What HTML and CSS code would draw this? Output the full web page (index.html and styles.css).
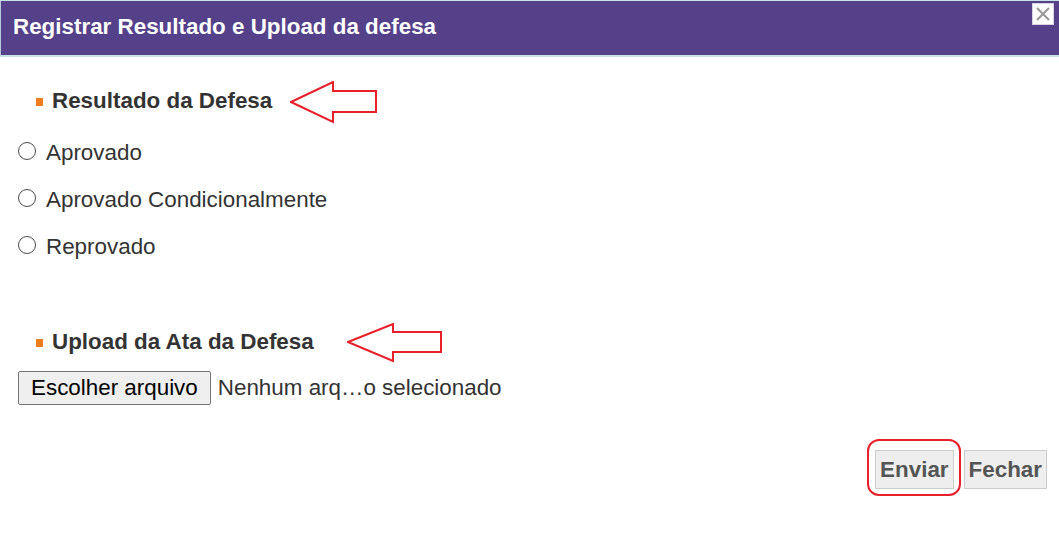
FILE: index.html
```html
<!DOCTYPE html>
<html lang="pt-BR">
<head>
    <meta charset="UTF-8">
    <meta name="viewport" content="width=device-width, initial-scale=1.0">
    <title>Registrar Resultado e Upload da defesa</title>
    <link rel="stylesheet" href="styles.css">
</head>
<body>
    <div class="dialog">
        <div class="dialog-header">
            <span class="dialog-title">Registrar Resultado e Upload da defesa</span>
            <button class="close-btn" title="Fechar">
                <svg width="16" height="16" viewBox="0 0 16 16">
                    <path d="M2 2 L14 14 M14 2 L2 14" stroke="#9a9a9a" stroke-width="2.2" fill="none"/>
                </svg>
            </button>
        </div>

        <div class="dialog-body">
            <div class="section-title">
                <span class="bullet"></span>Resultado da Defesa
                <svg class="arrow arrow-first" width="88" height="43" viewBox="0 0 88 43">
                    <polygon points="1,21 43,1 43,10 86,10 86,31 43,31 43,41" fill="none" stroke="#e8202a" stroke-width="2"/>
                </svg>
            </div>

            <label class="radio-row"><span class="radio"></span>Aprovado</label>
            <label class="radio-row"><span class="radio"></span>Aprovado Condicionalmente</label>
            <label class="radio-row"><span class="radio"></span>Reprovado</label>

            <div class="section-title upload-title">
                <span class="bullet"></span>Upload da Ata da Defesa
                <svg class="arrow arrow-second" width="96" height="40" viewBox="0 0 96 40">
                    <polygon points="1,19 46,1 46,9 94,9 94,29 46,29 46,38" fill="none" stroke="#e8202a" stroke-width="2"/>
                </svg>
            </div>

            <div class="file-row">
                <button class="file-btn">Escolher arquivo</button>
                <span class="file-name">Nenhum arq…o selecionado</span>
            </div>

            <div class="actions">
                <span class="highlight"><button class="action-btn">Enviar</button></span>
                <button class="action-btn close-action">Fechar</button>
            </div>
        </div>
    </div>
</body>
</html>
```

FILE: styles.css
```css
body {
    margin: 0;
    font-family: "Liberation Sans", Arial, sans-serif;
    background-color: #fff;
}
.dialog {
    border-top: 1px solid #c9e2e4;
}
.dialog-header {
    display: flex;
    justify-content: space-between;
    align-items: flex-start;
    height: 54px;
    padding: 0 5px 0 12px;
    background-color: #54418a;
    border-left: 1px solid #b9c9dc;
    border-bottom: 2px solid #c9e2e4;
}
.dialog-title {
    color: #fff;
    font-size: 22.4px;
    font-weight: bold;
    line-height: 52px;
}
.close-btn {
    display: flex;
    align-items: center;
    justify-content: center;
    width: 22px;
    height: 22px;
    margin-top: 2px;
    padding: 0;
    background-color: #fff;
    border: 1px solid #d8d4e4;
    cursor: pointer;
}
.dialog-body {
    padding: 29px 12px 0 18px;
}
.section-title {
    padding-left: 18px;
    font-size: 22.4px;
    font-weight: bold;
    line-height: 30px;
    color: #333;
}
.bullet {
    display: inline-block;
    width: 7px;
    height: 8px;
    margin-right: 9px;
    vertical-align: 2px;
    background-color: #f07d1d;
}
.arrow {
    vertical-align: middle;
    margin-top: -12px;
    margin-bottom: -12px;
}
.arrow-first {
    margin-left: 12px;
}
.arrow-second {
    margin-left: 27px;
}
.radio-row {
    display: block;
    font-size: 22.4px;
    line-height: 30px;
    color: #333;
    margin-top: 22px;
    margin-bottom: -5px;
}
.radio {
    display: inline-block;
    width: 16px;
    height: 16px;
    margin-right: 10px;
    border: 1px solid #4a4a4a;
    border-radius: 50%;
    vertical-align: baseline;
}
.upload-title {
    margin-top: 70px;
}
.file-row {
    display: flex;
    align-items: center;
    margin-top: 14px;
}
.file-btn {
    height: 34px;
    padding: 0 12px;
    font-family: "Liberation Sans", Arial, sans-serif;
    font-size: 22.4px;
    color: #000;
    background-color: #efefef;
    border: 1px solid #767676;
    border-radius: 2px;
}
.file-name {
    margin-left: 7px;
    font-size: 22.4px;
    color: #333;
}
.actions {
    display: flex;
    justify-content: flex-end;
    align-items: flex-start;
    margin-top: 34px;
}
.highlight {
    padding: 9px 5px 5px 6px;
    border: 2px solid #e8202a;
    border-radius: 12px;
}
.action-btn {
    display: block;
    height: 39px;
    padding: 0 4px;
    font-family: "Liberation Sans", Arial, sans-serif;
    font-size: 22.4px;
    font-weight: bold;
    color: #555;
    background-color: #eee;
    border: 1px solid #ccc;
}
.close-action {
    margin-top: 11px;
    margin-left: 3px;
}
```
